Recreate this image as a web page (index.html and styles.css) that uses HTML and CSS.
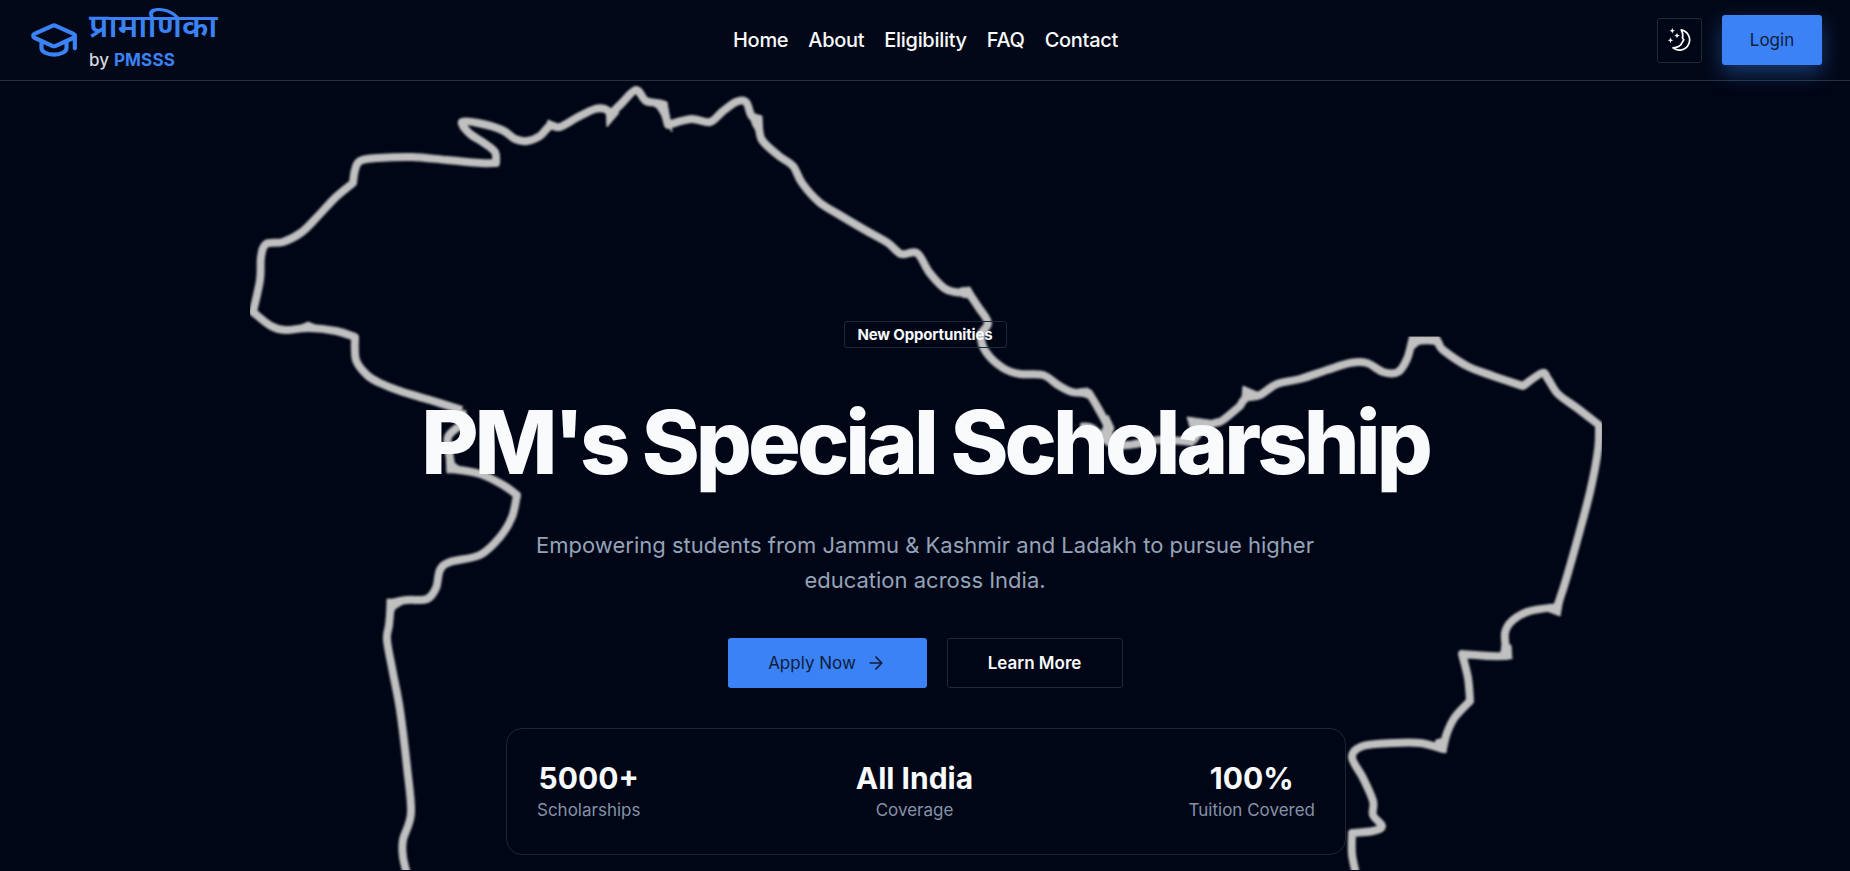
FILE: index.html
```html
<!DOCTYPE html>
<html lang="en">
<head>
<meta charset="utf-8">
<title>PM's Special Scholarship</title>
<link rel="stylesheet" href="styles.css">
</head>
<body>
<header class="header">
  <a class="brand">
    <svg class="brand-icon" viewBox="0 0 24 24"><path d="M21.42 10.922a1 1 0 0 0-.019-1.838L12.83 5.18a2 2 0 0 0-1.66 0L2.6 9.08a1 1 0 0 0 0 1.832l8.57 3.908a2 2 0 0 0 1.66 0z"/><path d="M22 10v6"/><path d="M6 12.5V16a6 3 0 0 0 12 0v-3.5"/></svg>
    <span class="brand-text">
      <span class="brand-name">प्रामाणिका</span>
      <span class="brand-by">by <b>PMSSS</b></span>
    </span>
  </a>
  <nav class="nav"><a>Home</a><a>About</a><a>Eligibility</a><a>FAQ</a><a>Contact</a></nav>
  <div class="actions">
    <button class="theme" aria-label="Toggle theme">
      <svg class="moon" viewBox="0 0 24 24"><path class="line" d="M13.2 1.900A10.200 10.200 0 1 1 5 19.900c4.500-.3 8.500-2.500 9-5.200l1.800-3-1.300-1.500c.6-2.600.2-5.800-1.300-8.300z"/><path class="star" d="M4.300 0l.8 1.900 1.900.8-1.900.8-.8 1.900-.8-1.900-1.900-.8 1.900-.8zM9 4.900l.8 1.900 1.900.8-1.900.8L9 10.300l-.8-1.900-1.900-.8 1.900-.8zM2.500 9.500l.8 1.900 1.900.8-1.900.8-.8 1.900-.8-1.900-1.900-.8 1.900-.8z"/></svg>
    </button>
    <button class="login">Login</button>
  </div>
</header>
<main class="hero">
  <svg class="map" viewBox="0 81 1850 790"><defs><clipPath id="frame"><path d="M250 81H1300V336.500H1602V870H250z"/></clipPath></defs><g clip-path="url(#frame)"><g class="land"><path id="outline" class="outline"/><path class="joint" d="M606 106l1 21 12-14zM644 100l17 0 6 2 5 30-15-24zM748 112l14 4 1 26-10-16zM545 130l3-10 12 5zM1187 417l36 5-18 9-10 13zM1243 386l14 6-16 16zM446 450l1 23 20-1-14-10zM387 599l22 1-14 9-8 16zM1544 610l13-1 4 -11 2 1-3 17zM1502 645l9 0 1 14-12-2zM1108 415l6 13-5 14-10-4zM1436 740l11-3-1 16-12-5zM290 330l18-8 20 8zM960 288l10-1 6 12-14-2zM1078 389l10-1 5 12-14-5zM1409 336h30l4 8h-4l-8-1h-10l-10 8z"/></g></g></svg>
  <section class="content">
    <div class="badge">New Opportunities</div>
    <h1 class="title">PM's Special Scholarship</h1>
    <p class="lead">Empowering students from Jammu &amp; Kashmir and Ladakh to pursue higher<br>education across India.</p>
    <div class="buttons">
      <button class="apply">Apply Now <svg class="arrow" viewBox="0 0 24 24"><path d="M5 12h14M12 5l7 7-7 7"/></svg></button>
      <button class="more">Learn More</button>
    </div>
    <div class="stats">
      <div class="stat"><strong>5000+</strong><span>Scholarships</span></div>
      <div class="stat"><strong>All India</strong><span>Coverage</span></div>
      <div class="stat"><strong>100%</strong><span>Tuition Covered</span></div>
    </div>
  </section>
</main>
<script src="map.js"></script>
</body>
</html>
```
FILE: styles.css
```css
* { box-sizing: border-box; }
body { margin: 0; height: 871px; overflow: hidden; display: flex; flex-direction: column; background: #010616; color: #f8fafc; font-family: Inter, "Liberation Sans", sans-serif; }
button { font: inherit; color: inherit; padding: 0; display: flex; align-items: center; justify-content: center; border-radius: 3px; }
.header { height: 81px; flex: none; display: grid; grid-template-columns: 1fr auto 1fr; align-items: center; padding: 0 28px 0 29px; background: #020817; border-bottom: 1px solid #2a303c; position: relative; }
.brand { display: flex; align-items: center; gap: 10px; }
.brand-icon { width: 50px; height: 50px; fill: none; stroke: #3b82f6; stroke-width: 2; stroke-linecap: round; stroke-linejoin: round; }
.brand-text { display: flex; flex-direction: column; }
.brand-name { height: 40px; line-height: 41px; font-size: 32.7px; font-weight: 600; color: #3b82f6; font-family: "Noto Sans Devanagari", "Noto Sans", sans-serif; white-space: nowrap; }
.brand-by { font-size: 17px; line-height: 22px; font-weight: 500; color: #d5d9df; letter-spacing: .15px; }
.brand-by b { color: #3b82f6; font-weight: 700; }
.nav { display: flex; gap: 20px; font-size: 20px; font-weight: 500; letter-spacing: -0.3px; }
.actions { display: flex; justify-content: flex-end; align-items: center; gap: 20px; }
.theme { width: 45px; height: 45px; background: #010616; border: 1px solid #1e293b; }
.moon { width: 24px; height: 24px; overflow: visible; }
.moon .line { fill: none; stroke: #fff; stroke-width: 1.7; stroke-linejoin: round; }
.moon .star { fill: #fff; }
.login { width: 100px; height: 50px; border: 0; background: #3b82f6; color: #0f1d3c; font-size: 17px; box-shadow: 0 8px 20px rgba(59, 130, 246, .4); }
.hero { flex: 1; display: grid; position: relative; }
.map { grid-area: 1 / 1; width: 1850px; height: 790px; }
.land { filter: blur(1px); }
.outline { fill: none; stroke: #c0c0c0; stroke-width: 8; stroke-linejoin: round; }
.joint { fill: #c0c0c0; stroke: #c0c0c0; stroke-width: 1; stroke-linejoin: round; }
.content { grid-area: 1 / 1; z-index: 1; display: flex; flex-direction: column; align-items: center; padding-top: 240px; }
.badge { width: 163px; height: 27px; display: flex; align-items: center; justify-content: center; border: 1px solid #1e293b; border-radius: 3px; font-size: 15px; font-weight: 700; letter-spacing: -.15px; }
.title { margin: 39px 0 0; font-size: 88px; line-height: 110px; font-weight: 800; letter-spacing: -3.95px; white-space: nowrap; }
.lead { margin: 31px 0 0; font-size: 22px; line-height: 35px; text-align: center; color: #94a3b8; white-space: nowrap; }
.buttons { display: flex; gap: 20px; margin-top: 40px; }
.apply { width: 199px; height: 50px; gap: 10px; border: 0; background: #3b82f6; color: #0f1d3c; font-size: 17px; }
.arrow { width: 20px; height: 20px; fill: none; stroke: currentColor; stroke-width: 2; stroke-linecap: round; stroke-linejoin: round; }
.more { width: 176px; height: 50px; background: #010616; border: 1px solid #1e293b; font-size: 17px; font-weight: 600; }
.stats { width: 840px; height: 127px; margin: 40px 0 0 2px; padding: 1px 30px 0; display: flex; align-items: center; justify-content: space-between; background: #010616; border: 1px solid #1e2533; border-radius: 16px; }
.stat { display: flex; flex-direction: column; align-items: center; }
.stat strong { font-size: 30px; line-height: 36px; font-weight: 700; }
.stat span { font-size: 17px; line-height: 28px; color: #8492a8; }
```
FILE: map.js
```javascript
// Runs of points are smoothed; a new run starts at each sharp corner.
const runs = [
  "462,410 430,400 400,391 380,383 367,375 356,360 355,337",
  "355,337 336,331 309,328 285,330 271,326 253,312",
  "253,312 260,280 261,257 266,244 283,242 302,232 319,215 336,197 353,183",
  "353,183 355,170 360,161 378,158 412,157 447,160 481,163 496,163",
  "496,163 495,152 484,143 469,133 462,122 478,123 502,130 515,139 527,141 540,136 550,126 560,127 578,117 595,109 605,109 611,114",
  "611,114 622,103 636,90 646,101 661,105 668,125",
  "668,125 691,119 710,122 722,112 736,102 746,102 751,115 758,123 762,140 779,156 793,166 802,183 819,202 838,214 865,230 888,243 901,254 917,253 929,272 944,288 955,292 969,293",
  "969,293 979,308 988,323 981,335 986,352 1003,368 1020,374 1043,375 1058,385 1072,392 1089,393",
  "1089,393 1098,408 1108,428 1108,443",
  "1080,427 1092,428 1110,443 1128,445 1160,440 1194,442",
  "1194,428 1215,423 1223,420 1240,406",
  "1240,406 1246,398 1260,395 1277,384 1300,379 1327,370 1350,363 1367,363 1383,372 1398,372 1407,359 1412,341",
  "1412,341 1435,341 1443,350 1467,366 1493,376 1523,386",
  "1523,386 1542,373 1548,379 1558,394 1577,408 1599,425",
  "1599,425 1598,450 1590,492 1577,541 1565,583 1557,607",
  "1557,607 1530,611 1513,620 1505,633 1507,656",
  "1507,656 1490,656 1462,654",
  "1462,654 1468,678 1470,701",
  "1470,701 1455,717 1447,733 1443,749",
  "1443,749 1420,743 1393,743 1363,746 1352,757 1363,778 1373,801 1373,815 1382,826 1373,831 1352,833",
  "1352,833 1352,854 1356,874",
  "462,410 462,423 448,437 450,458 452,469",
  "452,469 480,474 503,485 517,495",
  "517,495 512,517 500,537 480,555 450,562 440,570 436,588 427,599 407,600 391,603",
  "391,603 389,625 387,640 393,673 400,710 407,767 411,813 403,840 403,857 407,874"
];
const curve = run => {
  const p = run.split(" ").map(s => s.split(",").map(Number));
  let d = "";
  for (let i = 0; i < p.length - 1; i++) {
    const a = p[i - 1] || p[i], b = p[i], c = p[i + 1], e = p[i + 2] || c;
    d += `C${b[0] + (c[0] - a[0]) / 6},${b[1] + (c[1] - a[1]) / 6} ${c[0] - (e[0] - b[0]) / 6},${c[1] - (e[1] - b[1]) / 6} ${c[0]},${c[1]}`;
  }
  return d;
};
let last = "", d = "";
runs.forEach(r => {
  const pts = r.split(" ");
  if (pts[0] !== last) d += "M" + pts[0];
  d += curve(r);
  last = pts[pts.length - 1];
});
document.getElementById("outline").setAttribute("d", d);
```
